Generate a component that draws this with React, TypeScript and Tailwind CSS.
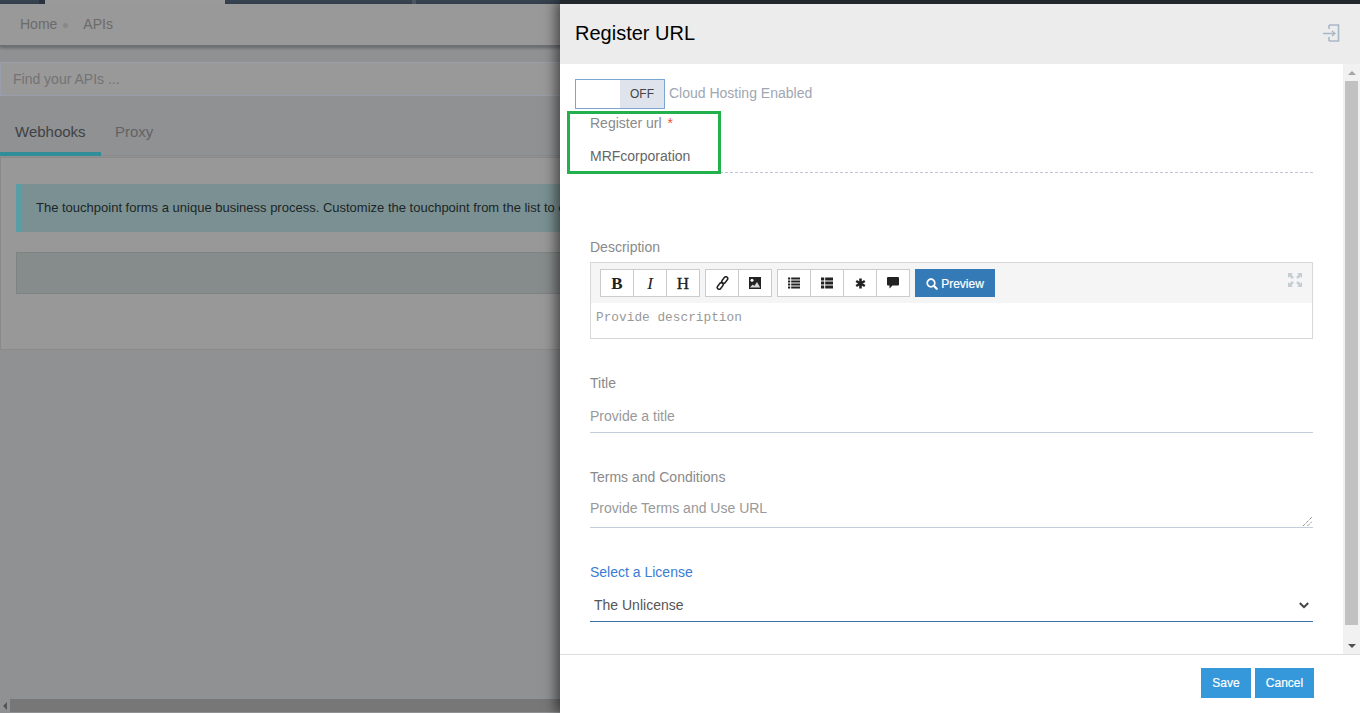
function ToolBtn({ children, last }: { children: React.ReactNode; last?: boolean }) {
  return (
    <div className={`h-[28px] flex items-center justify-center bg-white border-y border-l border-[#ccc] text-[#222] ${last ? "border-r w-[34px]" : "w-[33px]"}`}>
      {children}
    </div>
  );
}

function Letter({ children, kind }: { children: string; kind: "b" | "i" | "h" }) {
  const cls =
    kind === "b"
      ? "font-bold text-[17px]"
      : kind === "i"
        ? "italic text-[17px]"
        : "text-[17px] [-webkit-text-stroke:0.3px_#222]";
  return <span className={`font-['Liberation_Serif',serif] leading-none ${cls}`}>{children}</span>;
}

function IconLink() {
  return (
    <svg width="13" height="14" viewBox="0 0 13 14" fill="none" stroke="#222" strokeWidth="1.5">
      <rect x="-1.9" y="-3.6" width="3.8" height="7.2" rx="1.9" transform="translate(8.8 4) rotate(38)" />
      <rect x="-1.9" y="-3.6" width="3.8" height="7.2" rx="1.9" transform="translate(4.2 10) rotate(38)" />
    </svg>
  );
}

function IconImage() {
  return (
    <svg width="12" height="12" viewBox="0 0 12 12">
      <rect width="12" height="12" y="0" fill="#222" />
      <circle cx="3" cy="3.3" r="1.5" fill="#fff" />
      <path d="M0.8 10.6l3-3 1.5 1.4 2.7-4 3.2 5.6z" fill="#d8d8d8" />
    </svg>
  );
}

function IconList() {
  return (
    <svg width="12" height="12" viewBox="0 0 12 12" fill="#222">
      <path d="M0 0.5h2.2v2H0zM3.2 0.5H12v2H3.2zM0 3.5h2.2v2H0zM3.2 3.5H12v2H3.2zM0 6.5h2.2v2H0zM3.2 6.5H12v2H3.2zM0 9.5h2.2v2H0zM3.2 9.5H12v2H3.2z" />
    </svg>
  );
}

function IconThList() {
  return (
    <svg width="12" height="12" viewBox="0 0 12 12" fill="#222">
      <path d="M0 0.5h3.2v3H0zM4.2 0.5H12v3H4.2zM0 4.5h3.2v3H0zM4.2 4.5H12v3H4.2zM0 8.5h3.2v3H0zM4.2 8.5H12v3H4.2z" />
    </svg>
  );
}

function IconAsterisk() {
  return (
    <svg width="11" height="11" viewBox="0 0 11 11" stroke="#222" strokeWidth="2.6">
      <path d="M5.5 0.5v10M1.2 3l8.6 5M1.2 8l8.6-5" />
    </svg>
  );
}

function IconComment() {
  return (
    <svg width="12" height="12" viewBox="0 0 12 12" fill="#222">
      <path d="M1 0h10a1 1 0 0 1 1 1v6.5a1 1 0 0 1-1 1H5.5L2.5 11.5V8.5H1a1 1 0 0 1-1-1V1a1 1 0 0 1 1-1z" />
    </svg>
  );
}

export default function App() {
  return (
    <div className="relative w-[1360px] h-[713px] overflow-hidden bg-[#8f9193] font-['Liberation_Sans',Arial,sans-serif] text-[14px]">
      {/* page behind the overlay */}
      <div className="flex h-[4px] bg-[#36424f]">
        <div className="w-[45px] flex justify-end"><div className="w-[6px] bg-[#2a333d]" /></div>
        <div className="w-[180px] bg-[#9a9a9a]" />
        <div className="w-[187px]" />
        <div className="w-[4px] bg-[#4a5560]" />
      </div>
      <div className="h-[43px] bg-[#999999] border-b-2 border-[#6f7072] flex items-center pl-[20px] text-[#6b6b6b] shadow-[0_1px_3px_rgba(0,0,0,0.3)]">
        <span>Home</span>
        <span className="w-[5px] h-[5px] rounded-full bg-[#888888] ml-[6px] mr-[15px] mt-px" />
        <span>APIs</span>
      </div>
      <div className="mt-[15px] h-[34px] bg-[#999999] border border-[#9a9dab] flex items-center pl-[12px] text-[#737373]">Find your APIs ...</div>
      <div className="mt-[14px] flex h-[46px] border-b border-[#8a8a8a]">
        <div className="w-[101px] h-[46px] pl-[15px] pt-[12px] text-[15px] leading-[20px] text-[#3f4245] border-b-[4px] border-[#2f8e98]">Webhooks</div>
        <div className="pl-[14px] pt-[12px] text-[15px] leading-[20px] text-[#636363]">Proxy</div>
      </div>
      <div className="mt-px h-[193px] bg-[#989898] border border-[#8a8a8a] pl-[15px] pt-[26px]">
        <div className="h-[48px] bg-[#7a9092] border-l-[5px] border-[#5a9ea5] pl-[15px] flex items-center whitespace-nowrap text-[13px] text-[#1c2626]">
          The touchpoint forms a unique business process. Customize the touchpoint from the list to customize it.
        </div>
        <div className="mt-[20px] h-[42px] bg-[#868c8b] border border-[#7e8382]" />
      </div>
      <div className="absolute left-0 right-0 bottom-px h-[13px] bg-[#8f9193] flex items-center">
        <div className="w-[10px] flex justify-center">
          <div className="w-0 h-0 border-y-[4px] border-y-transparent border-r-[4px] border-r-[#555]" />
        </div>
        <div className="flex-1 h-[13px] bg-[#777777]" />
      </div>

      {/* drawer */}
      <div className="absolute left-[560px] top-0 w-[800px] h-[713px] flex flex-col bg-white shadow-[-4px_0_12px_rgba(0,0,0,0.55)]">
        <div className="h-[4px] bg-[#23282e]" />
        <div className="h-[60px] bg-[#ececec] flex items-center justify-between pl-[15px] pr-[19px]">
          <span className="text-[20px] text-black mb-[3px]">Register URL</span>
          <svg width="20" height="20" viewBox="0 0 20 20" fill="none" stroke="#a9b8c7" className="mb-[2px]">
            <path d="M8 3.5h9.5v16H8M8 3.5v4M8 15.5v4" strokeWidth="1.6" transform="translate(0 -1.5)" />
            <path d="M2 10.5h12M11 8l3 2.5-3 2.5" strokeWidth="1.3" />
          </svg>
        </div>

        <div className="flex-1 flex min-h-0">
          <div className="relative flex-1 flex flex-col pt-[15px] pl-[15px] min-w-0">
            <div className="flex items-center h-[30px]">
              <div className="w-[90px] h-[30px] border border-[#7ba6d2] flex justify-end bg-white">
                <span className="w-[44px] bg-[#dfe3eb] text-[12px] text-[#444] flex items-center justify-center">OFF</span>
              </div>
              <span className="ml-[4px] text-[#a0a6b2] mb-[2px]">Cloud Hosting Enabled</span>
            </div>

            <div className="pl-[15px] pr-[30px]">
              <div className="mt-[6px] h-[16px] leading-[16px] text-[#8a8a8a]">
                Register url <span className="text-[#f0513f] ml-[2px]">*</span>
              </div>
              <div className="mt-[17px] h-[25px] border-b border-dashed border-[#c4c4d8] text-[#666] leading-[16px]">MRFcorporation</div>

              <div className="mt-[66px] h-[16px] leading-[16px] text-[#8a8a8a]">Description</div>
              <div className="mt-[7px] h-[77px] border border-[#d8d8d8]">
                <div className="h-[40px] bg-[#f5f5f5] flex items-start pt-[6px] pl-[9px] relative">
                  <div className="flex">
                    <ToolBtn><Letter kind="b">B</Letter></ToolBtn>
                    <ToolBtn><Letter kind="i">I</Letter></ToolBtn>
                    <ToolBtn last><Letter kind="h">H</Letter></ToolBtn>
                  </div>
                  <div className="flex ml-[5px]">
                    <ToolBtn><IconLink /></ToolBtn>
                    <ToolBtn last><IconImage /></ToolBtn>
                  </div>
                  <div className="flex ml-[5px]">
                    <ToolBtn><IconList /></ToolBtn>
                    <ToolBtn><IconThList /></ToolBtn>
                    <ToolBtn><IconAsterisk /></ToolBtn>
                    <ToolBtn last><IconComment /></ToolBtn>
                  </div>
                  <div className="ml-[5px] w-[80px] h-[28px] pt-px bg-[#337ab7] text-white text-[12px] flex items-center justify-center gap-[3px] [-webkit-text-stroke:0.2px_white]">
                    <svg width="12" height="12" viewBox="0 0 12 12" fill="none" stroke="#fff" strokeWidth="1.7">
                      <circle cx="5" cy="5" r="3.8" />
                      <path d="M7.8 7.8l3.6 3.6" strokeWidth="2.2" />
                    </svg>
                    <span>Preview</span>
                  </div>
                  <svg width="16" height="16" viewBox="0 0 16 16" fill="#c4cdd2" className="absolute right-[9px] top-[9px]">
                    <path d="M1 1h5L4.4 2.6 6.9 5 5 6.9 2.6 4.4 1 6zM15 1v5l-1.6-1.6L11 6.9 9.1 5l2.5-2.4L10 1zM1 15v-5l1.6 1.6L5 9.1 6.9 11l-2.5 2.4L6 15zM15 15h-5l1.6-1.6L9.1 11 11 9.1l2.4 2.5L15 10z" />
                  </svg>
                </div>
                <div className="pl-[5px] pt-[8px] font-['Liberation_Mono',monospace] text-[12.8px] leading-[14px] text-[#999]">Provide description</div>
              </div>

              <div className="mt-[36px] h-[16px] leading-[16px] text-[#8a8a8a]">Title</div>
              <div className="mt-[17px] h-[25px] border-b border-[#c2cfdb] text-[#999] leading-[16px]">Provide a title</div>

              <div className="mt-[36px] h-[16px] leading-[16px] text-[#8a8a8a]">Terms and Conditions</div>
              <div className="relative mt-[15px] h-[28px] border-b border-[#c2cfdb] text-[#999] leading-[16px]">
                Provide Terms and Use URL
                <svg width="9" height="9" viewBox="0 0 9 9" stroke="#666" className="absolute right-px bottom-[1px]">
                  <path d="M0 9L9 0M4.5 9L9 4.5" strokeDasharray="1 1" strokeWidth="1" />
                </svg>
              </div>

              <div className="mt-[36px] h-[16px] leading-[16px] text-[#3a7bd5]">Select a License</div>
              <div className="mt-[17px] h-[25px] border-b border-[#3b6fb0] pl-[4px] pr-[4px] text-[#555] leading-[16px] flex justify-between items-start">
                <span>The Unlicense</span>
                <svg width="10" height="7" viewBox="0 0 10 7" fill="none" stroke="#444" strokeWidth="2" className="mt-[5px]">
                  <path d="M0.8 1l4.2 4.2L9.2 1" />
                </svg>
              </div>
            </div>

            <div className="absolute left-[7px] top-[47px] w-[154px] h-[63px] border-[3px] border-[#22b14c]" />
          </div>

          <div className="w-[17px] bg-[#f1f1f1] flex flex-col items-center">
            <div className="h-[17px] flex items-center justify-center">
              <div className="w-0 h-0 border-x-[4px] border-x-transparent border-b-[4px] border-b-[#a3a3a3]" />
            </div>
            <div className="w-[13px] flex-1 bg-[#c1c1c1]" />
            <div className="h-[29px] flex items-end justify-center pb-[6px]">
              <div className="w-0 h-0 border-x-[4px] border-x-transparent border-t-[4px] border-t-[#505050]" />
            </div>
          </div>
        </div>

        <div className="h-[59px] border-t border-[#dedede] bg-white flex items-start justify-end gap-[4px] pr-[46px] pt-[13px]">
          <div className="w-[50px] h-[30px] bg-[#3498db] text-white text-[12px] flex items-center justify-center [-webkit-text-stroke:0.2px_white]">Save</div>
          <div className="w-[59px] h-[30px] bg-[#3498db] text-white text-[12px] flex items-center justify-center [-webkit-text-stroke:0.2px_white]">Cancel</div>
        </div>
      </div>
    </div>
  );
}
